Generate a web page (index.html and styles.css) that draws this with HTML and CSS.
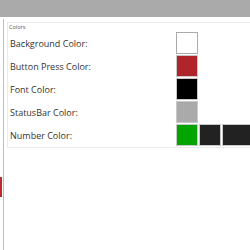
FILE: index.html
```html
<!DOCTYPE html>
<html lang="en">
<head>
  <meta charset="UTF-8">
  <title>Colors</title>
  <meta name="viewport" content="width=device-width, initial-scale=1.0">
  <link rel="stylesheet" href="styles.css">
</head>
<body>
  <div class="topbar"></div>

  <div class="main">
    <div class="sidebar">
      <div class="marker"></div>
    </div>

    <div class="content">
      <div class="panel">
        <div class="panel-title">Colors</div>

        <div class="row">
          <span class="label">Background Color:</span>
          <div class="swatches">
            <span class="swatch white"></span>
          </div>
        </div>

        <div class="row">
          <span class="label">Button Press Color:</span>
          <div class="swatches">
            <span class="swatch red"></span>
          </div>
        </div>

        <div class="row">
          <span class="label">Font Color:</span>
          <div class="swatches">
            <span class="swatch black"></span>
          </div>
        </div>

        <div class="row">
          <span class="label">StatusBar Color:</span>
          <div class="swatches">
            <span class="swatch gray"></span>
          </div>
        </div>

        <div class="row">
          <span class="label">Number Color:</span>
          <div class="swatches">
            <span class="swatch green"></span>
            <span class="swatch dark"></span>
            <span class="swatch dark"></span>
          </div>
        </div>
      </div>
    </div>
  </div>
</body>
</html>
```

FILE: styles.css
```css
body {
  margin: 0;
  width: 250px;
  height: 250px;
  overflow: hidden;
  font-family: 'Open Sans', 'Liberation Sans', sans-serif;
  background: #fff;
  color: #333;
}

.topbar {
  height: 17px;
  background: #aaaaaa;
}

.main {
  display: flex;
  height: 233px;
  padding-top: 2px;
  box-sizing: border-box;
}

.sidebar {
  position: relative;
  width: 3px;
  border-right: 1px solid #bdbdbd;
  flex-shrink: 0;
}

.marker {
  position: absolute;
  left: 0;
  top: 158px;
  width: 2px;
  height: 20px;
  background: #c1272d;
}

.content {
  flex: 1;
  min-width: 0;
  overflow: hidden;
  padding: 3px 0 0 3px;
}

.panel {
  border: 1px solid #ebebeb;
  border-right: none;
  padding-top: 1px;
}

.panel-title {
  font-size: 5.5px;
  line-height: 7px;
  height: 8px;
  padding-left: 1px;
  color: #555;
}

.row {
  display: flex;
  align-items: center;
  height: 23px;
}

.label {
  width: 166px;
  padding-left: 2px;
  font-size: 9px;
  flex-shrink: 0;
}

.swatches {
  display: flex;
  gap: 1px;
  align-self: flex-start;
  flex-shrink: 0;
}

.swatch {
  display: block;
  box-sizing: border-box;
  width: 22px;
  height: 22px;
  border: 1px solid #c8c8c8;
  flex-shrink: 0;
}

.white { background: #fff; border-color: #aaa; }
.red { background: #b0252a; }
.black { background: #000; }
.gray { background: #aaa; }
.green { background: #04a400; }
.dark { background: #222; }
.dark:last-child { width: 40px; }
```
